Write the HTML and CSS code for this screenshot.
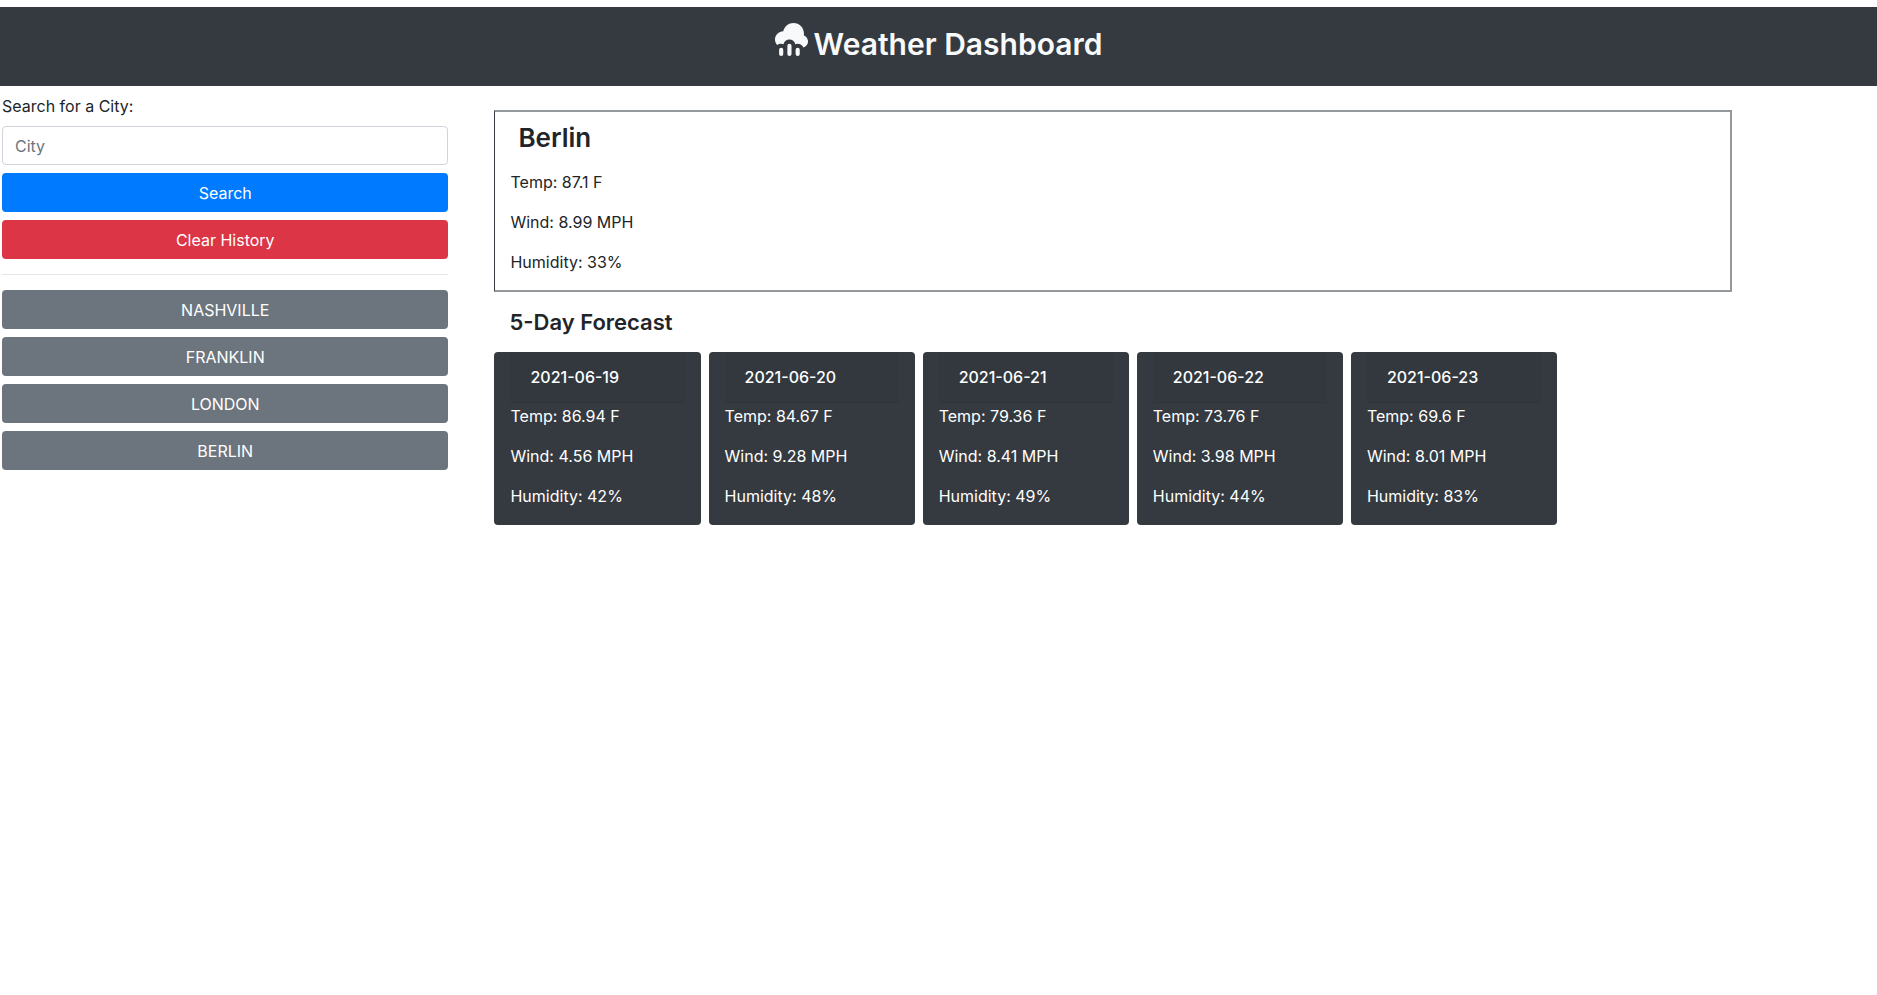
FILE: index.html
```html
<!DOCTYPE html>
<html lang="en">
<head>
<meta charset="utf-8">
<meta name="viewport" content="width=device-width, initial-scale=1">
<title>Weather Dashboard</title>
<link rel="stylesheet" href="styles.css">
</head>
<body>
<header class="banner">
  <h1 class="banner-title">
    <svg class="banner-icon" viewBox="0 0 8 8" aria-hidden="true"><path d="M4.5 0c-1.2 0-2.22.83-2.5 2-1.1 0-2 .9-2 2 0 .53.2.99.53 1.34.26-.22.6-.34.97-.34.2 0 .39.05.56.13.17-.64.72-1.13 1.44-1.13.69 0 1.27.49 1.44 1.13.17-.07.36-.13.56-.13.63 0 1.15.39 1.38.94.64-.17 1.13-.75 1.13-1.44 0-.65-.42-1.29-1-1.5v-.5c0-1.38-1.12-2.5-2.5-2.5z"/><rect x="1" y="6" width="1" height="2" rx=".5"/><rect x="3" y="5" width="1" height="3" rx=".5"/><rect x="5" y="6" width="1" height="2" rx=".5"/></svg>
    <span>Weather Dashboard</span>
  </h1>
</header>
<div class="layout">
  <aside class="sidebar">
    <form class="search">
      <label class="search-label" for="city">Search for a City:</label>
      <input class="search-input" id="city" type="text" placeholder="City">
      <button class="btn btn-primary" type="button">Search</button>
      <button class="btn btn-danger" type="button">Clear History</button>
    </form>
    <hr class="divider">
    <div class="history">
      <button class="btn" type="button">NASHVILLE</button>
      <button class="btn" type="button">FRANKLIN</button>
      <button class="btn" type="button">LONDON</button>
      <button class="btn" type="button">BERLIN</button>
    </div>
  </aside>
  <main class="main">
    <section class="current">
      <h2 class="city-name">Berlin</h2>
      <div class="readings">
        <p>Temp: 87.1 F</p>
        <p>Wind: 8.99 MPH</p>
        <p>Humidity: 33%</p>
      </div>
    </section>
    <h3 class="forecast-title">5-Day Forecast</h3>
    <section class="forecast">
      <article class="card">
        <h4 class="card-date">2021-06-19</h4>
        <div class="readings"><p>Temp: 86.94 F</p><p>Wind: 4.56 MPH</p><p>Humidity: 42%</p></div>
      </article>
      <article class="card">
        <h4 class="card-date">2021-06-20</h4>
        <div class="readings"><p>Temp: 84.67 F</p><p>Wind: 9.28 MPH</p><p>Humidity: 48%</p></div>
      </article>
      <article class="card">
        <h4 class="card-date">2021-06-21</h4>
        <div class="readings"><p>Temp: 79.36 F</p><p>Wind: 8.41 MPH</p><p>Humidity: 49%</p></div>
      </article>
      <article class="card">
        <h4 class="card-date">2021-06-22</h4>
        <div class="readings"><p>Temp: 73.76 F</p><p>Wind: 3.98 MPH</p><p>Humidity: 44%</p></div>
      </article>
      <article class="card">
        <h4 class="card-date">2021-06-23</h4>
        <div class="readings"><p>Temp: 69.6 F</p><p>Wind: 8.01 MPH</p><p>Humidity: 83%</p></div>
      </article>
    </section>
  </main>
</div>
</body>
</html>
```

FILE: styles.css
```css
* {
  box-sizing: border-box;
}

body {
  margin: 0;
  padding-top: 7px;
  background: #fff;
  color: #212529;
  font-family: Inter, "Liberation Sans", sans-serif;
  font-size: 16px;
  line-height: 24px;
}

h1, h2, h3, h4, p {
  margin: 0;
}

h1, h2, h3 {
  font-weight: 600;
}

.banner {
  padding: 16px 16px 21px;
  background: #343a40;
  color: #f8f9fa;
}

.banner-title {
  display: flex;
  justify-content: center;
  gap: 6px;
  font-size: 30px;
  line-height: 42px;
}

.banner-icon {
  width: 33px;
  height: 33px;
  fill: currentColor;
}

.layout {
  display: flex;
}

.sidebar {
  flex: 0 0 24%;
  padding: 8px 2px;
}

.search,
.history {
  display: grid;
  gap: 8px;
}

.search-input,
.btn {
  width: 100%;
  height: 39px;
  border-radius: 4px;
  font: inherit;
}

.search-input {
  padding: 0 12px;
  border: 1px solid #ced4da;
  background: #fff;
  color: #495057;
}

.search-input::placeholder {
  color: #6c757d;
  opacity: 1;
}

.btn {
  padding: 0 12px;
  border: 0;
  background: #6c757d;
  color: #fff;
  cursor: pointer;
}

.btn-primary {
  background: #007bff;
}

.btn-danger {
  background: #dc3545;
}

.divider {
  margin: 15px 0;
  border: 0;
  border-top: 1px solid #e5e5e5;
}

.main {
  flex: 1;
  padding: 24px 145px 24px 44px;
}

.current {
  padding: 9px 15px 16px;
  border: 2px solid #93989d;
  border-left: 1px solid #343a40;
}

.city-name {
  padding: 0 8px;
  font-size: 26px;
  line-height: 34px;
}

.readings {
  display: grid;
  gap: 16px;
}

.current .readings {
  padding-top: 15px;
}

.forecast-title {
  padding: 16px 15px 15px;
  font-size: 22px;
  line-height: 29px;
}

.forecast {
  display: grid;
  grid-template-columns: repeat(5, 1fr);
  gap: 8px;
  padding-right: 175px;
}

.card {
  padding: 0 16px 17px;
  border-radius: 4px;
  background: #343a40;
  color: #fff;
}

.card-date {
  padding: 13px 20px;
  border-bottom: 1px solid #2f353a;
  background: #32383e;
  font-size: 16px;
  font-weight: 500;
  line-height: 24px;
}

.card .readings {
  padding-top: 1px;
}
```
